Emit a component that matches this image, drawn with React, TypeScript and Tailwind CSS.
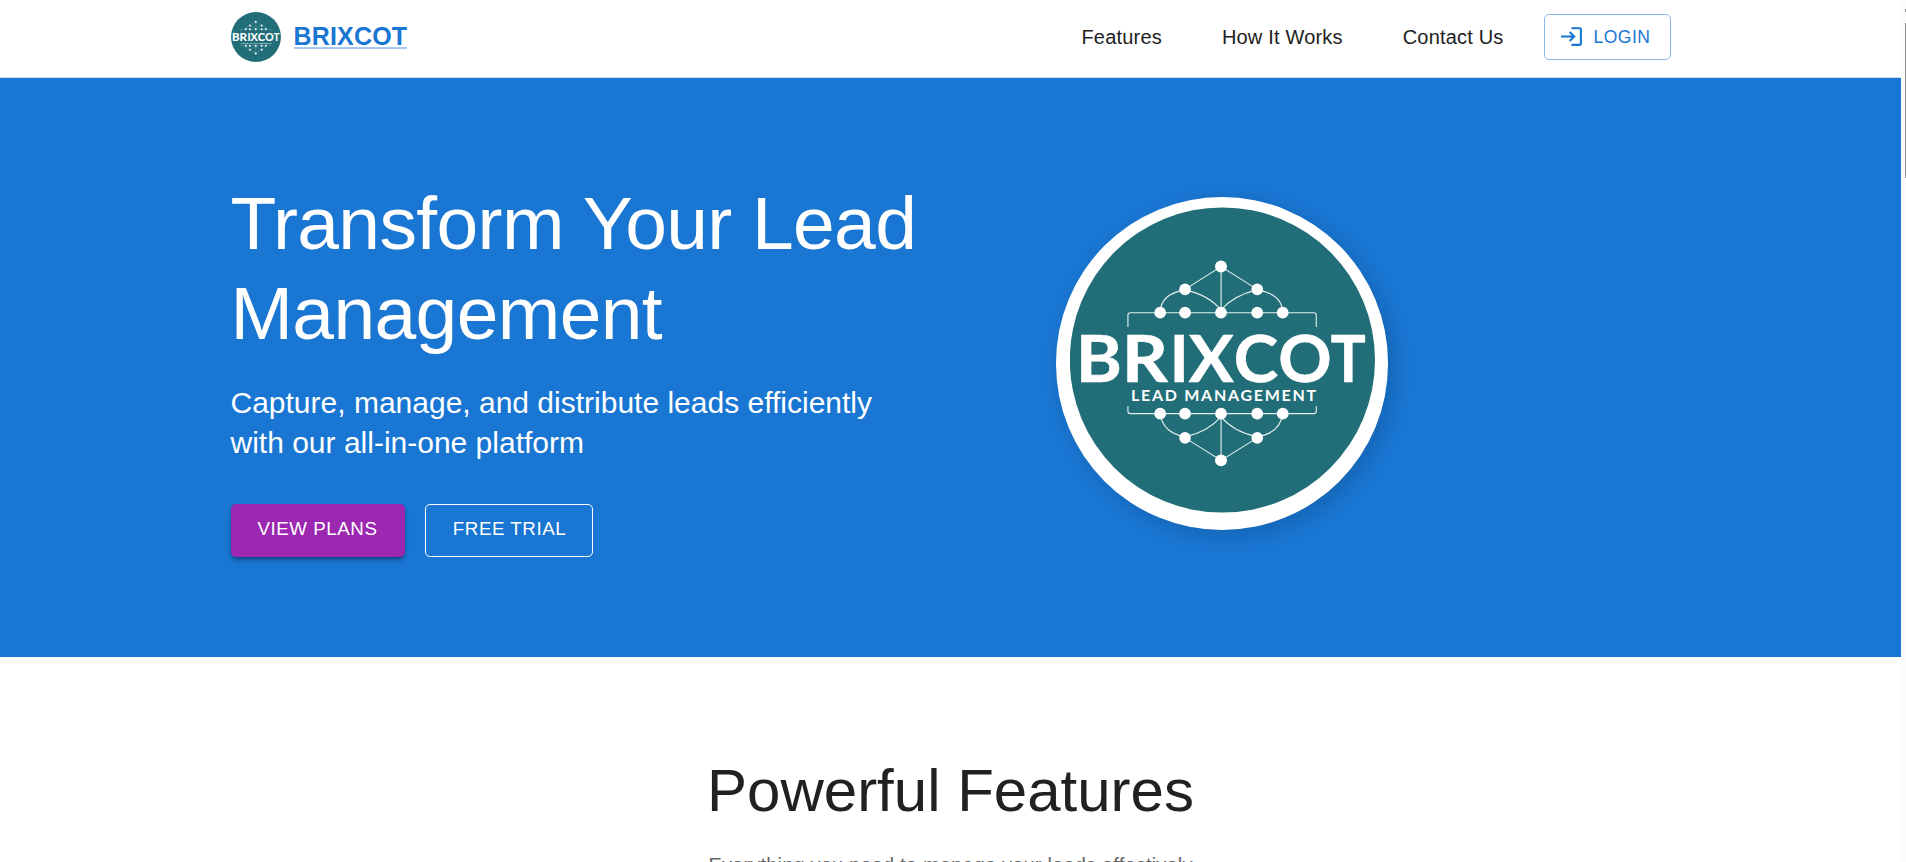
import type { ReactNode } from "react";

const wordmark: { ch: string; x: number; w: number }[] = [
  { ch: "B", x: 20, w: 46 },
  { ch: "R", x: 66, w: 46 },
  { ch: "I", x: 114, w: 19 },
  { ch: "X", x: 133, w: 45 },
  { ch: "C", x: 178, w: 44.5 },
  { ch: "O", x: 222.5, w: 53.5 },
  { ch: "T", x: 275, w: 35 },
];

const rowX = [104.3, 129.2, 165.2, 201.5, 227];

function Emblem({ className }: { className: string }) {
  return (
    <svg className={className} viewBox="14 10 305.4 306" role="img" aria-label="Brixcot Lead Management">
      <circle cx="166.6" cy="163" r="152.8" fill="#216e78" />
      <g fill="none" stroke="#e4efef" strokeWidth="1.1">
        <path d="M72 130V118Q72 115.700 74.500 115.700H258Q260.600 115.700 260.600 118V130" />
        <path d="M129.200 92.300L165.200 69.500L201.500 92.300M165.300 69.500V115.500" />
        <path d="M129.200 92.800Q104.500 97 104.300 115.500M129.200 92.800Q153 98 165.200 113M201.500 92.800Q178 98 165.200 113M201.500 92.800Q226.500 97 227 115.500" />
        <path d="M72 209V214Q72 216.700 74.500 216.700H258Q260.600 216.700 260.600 214V209" />
        <path d="M129.200 241L165.200 263.500L201.500 241M165.300 216.700V263.500" />
        <path d="M129.200 240Q107 236 104.300 216.700M129.200 240Q152 235 165.200 220M201.500 240Q178 235 165.200 220M201.500 240Q224.500 236 227 216.700" />
      </g>
      <g fill="#fff">
        <circle cx="165.200" cy="69.300" r="6" />
        <circle cx="129.200" cy="92.300" r="5.800" />
        <circle cx="201.500" cy="92.300" r="5.800" />
        {rowX.map((x) => (
          <circle key={x} cx={x} cy="115.600" r="5.900" />
        ))}
        {rowX.map((x) => (
          <circle key={x} cx={x} cy="216.700" r="5.900" />
        ))}
        <circle cx="129.200" cy="241" r="5.800" />
        <circle cx="201.500" cy="241" r="5.800" />
        <circle cx="165.200" cy="263.500" r="6" />
      </g>
      <g className="font-['Lato',sans-serif]" fill="#fff" fontWeight="700">
        {wordmark.map((l) => (
          <text
            key={l.ch}
            x={l.x}
            y="185"
            fontSize="65"
            textLength={l.w}
            lengthAdjust="spacingAndGlyphs"
            stroke="#fff"
            strokeWidth="0.6"
          >
            {l.ch}
          </text>
        ))}
        <text x="75" y="203.800" fontSize="16" textLength="185.500">
          LEAD MANAGEMENT
        </text>
      </g>
    </svg>
  );
}

function NavLink({ children }: { children: ReactNode }) {
  return (
    <a className="whitespace-nowrap text-[20px] leading-[30px] tracking-[0.188px] text-[#212121]">{children}</a>
  );
}

export default function App() {
  return (
    <div className="flex h-[862px] w-full overflow-hidden bg-white font-['Liberation_Sans',Arial,sans-serif]">
      <div className="flex min-w-0 flex-1 flex-col">
        <header className="h-[78px] shrink-0 border-b border-[#d5dfea]">
          <div className="mx-auto flex h-[73px] w-[1440px] items-center justify-between">
            <a className="flex items-center gap-[13px]">
              <Emblem className="size-[50px]" />
              <span className="border-b-2 border-[#a6cbf3] pt-[2px] text-[25px] font-bold leading-[21px] tracking-[0.190px] text-[#1976d2]">
                BRIXCOT
              </span>
            </a>
            <nav className="flex items-center">
              <div className="flex gap-[60px] pr-10">
                <NavLink>Features</NavLink>
                <NavLink>How It Works</NavLink>
                <NavLink>Contact Us</NavLink>
              </div>
              <button className="flex h-[46px] w-[127px] items-center gap-[10px] rounded-[5px] border border-[#8cbae8] pl-[14px] text-[17.500px] tracking-[0.500px] text-[#1976d2]">
                <svg className="size-[25px]" viewBox="0 0 24 24" fill="currentColor">
                  <path d="M11 7 9.600 8.400l2.600 2.600H2v2h10.200l-2.600 2.600L11 17l5-5-5-5zm9 12h-8v2h8c1.100 0 2-.9 2-2V5c0-1.100-.9-2-2-2h-8v2h8v14z" />
                </svg>
                <span className="pt-[2px]">LOGIN</span>
              </button>
            </nav>
          </div>
        </header>

        <section className="h-[579px] shrink-0 bg-[#1976d2] text-white">
          <div className="mx-auto flex h-full w-[1440px]">
            <div className="w-[700px] pt-[100px]">
              <h1 className="text-[75px] leading-[90px] tracking-[-0.625px]">Transform Your Lead Management</h1>
              <p className="mt-[25px] text-[30px] leading-[40px]">
                Capture, manage, and distribute leads efficiently
                <br />
                with our all-in-one platform
              </p>
              <div className="mt-[41px] flex gap-5">
                <button className="h-[53px] w-[174px] rounded-[5px] bg-[#9c27b0] pb-[2px] text-[18.750px] tracking-[0.536px] shadow-[0_4px_6px_-2px_rgba(0,0,0,0.3),0_2px_3px_rgba(0,0,0,0.2)]">
                  VIEW PLANS
                </button>
                <button className="h-[53px] w-[168px] rounded-[5px] border border-white pb-[2px] pl-[2px] text-[18.750px] tracking-[0.536px]">
                  FREE TRIAL
                </button>
              </div>
            </div>
            <div className="pl-[125px] pt-[119px]">
              <div className="h-[333px] w-[332px] rounded-full bg-white pl-[14px] pt-[10px] shadow-[6px_6px_19px_rgba(0,0,0,0.15)]">
                <Emblem className="h-[306px] w-[305px]" />
              </div>
            </div>
          </div>
        </section>

        <section className="flex flex-col items-center pt-[99px] text-center">
          <h2 className="text-[60px] leading-[70px] text-[#212121]">Powerful Features</h2>
          <p className="mt-[22px] whitespace-nowrap text-[20px] leading-[35px] tracking-[0.190px] text-[#666]">
            Everything you need to manage your leads effectively
          </p>
        </section>
      </div>

      <div className="flex w-[5px] shrink-0 flex-col items-end bg-[#fbfbfb]">
        <div className="mt-[9px] h-[3px] w-px bg-[#8b8b8b]" />
        <div className="mt-[11px] h-[155px] w-px bg-[#8b8b8b]" />
      </div>
    </div>
  );
}
